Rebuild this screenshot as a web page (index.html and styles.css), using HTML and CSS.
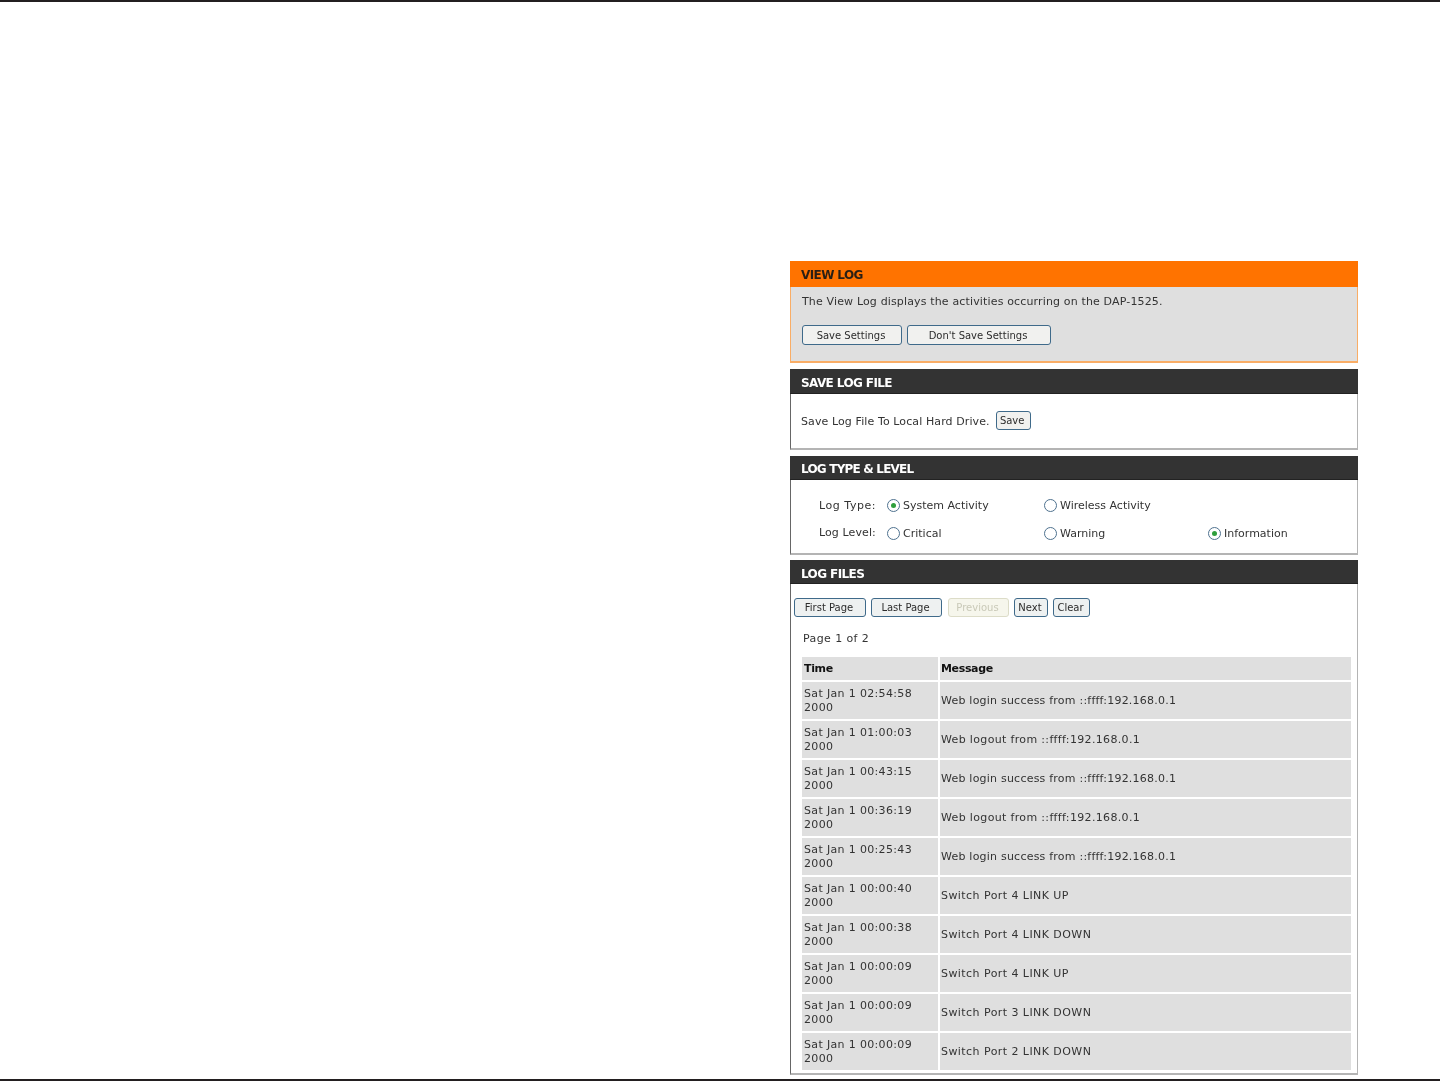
FILE: index.html
```html
<!DOCTYPE html>
<html lang="en">
<head>
<meta charset="utf-8">
<title>View Log</title>
<link rel="stylesheet" href="styles.css">
</head>
<body>
<div class="page">
  <div class="rule"></div>
  <main class="content">
    <div class="column">
      <section class="panel panel-intro">
        <h2 class="head head-orange">VIEW LOG</h2>
        <div class="body body-intro">
          <p class="intro-text">The View Log displays the activities occurring on the DAP-1525.</p>
          <div class="btn-row btn-row-intro">
            <button class="btn btn-save-settings">Save Settings</button>
            <button class="btn btn-dont-save">Don't Save Settings</button>
          </div>
        </div>
      </section>
      <section class="panel panel-save">
        <h2 class="head">SAVE LOG FILE</h2>
        <div class="body body-save">
          <span>Save Log File To Local Hard Drive.</span>
          <button class="btn btn-save">Save</button>
        </div>
      </section>
      <section class="panel panel-type">
        <h2 class="head">LOG TYPE &amp; LEVEL</h2>
        <div class="body body-type">
          <span class="lbl">Log Type:</span>
          <span class="opt"><i class="radio on"></i>System Activity</span>
          <span class="opt"><i class="radio"></i>Wireless Activity</span>
          <span></span>
          <span class="lbl lbl-level">Log Level:</span>
          <span class="opt"><i class="radio"></i>Critical</span>
          <span class="opt"><i class="radio"></i>Warning</span>
          <span class="opt"><i class="radio on"></i>Information</span>
        </div>
      </section>
      <section class="panel panel-files">
        <h2 class="head">LOG FILES</h2>
        <div class="body body-files">
          <div class="btn-row btn-row-files">
            <button class="btn btn-first">First Page</button>
            <button class="btn btn-last">Last Page</button>
            <button class="btn btn-prev" disabled>Previous</button>
            <button class="btn btn-next">Next</button>
            <button class="btn btn-clear">Clear</button>
          </div>
          <p class="page-no">Page 1 of 2</p>
          <table class="log">
            <thead><tr><th class="c-time">Time</th><th class="c-msg">Message</th></tr></thead>
            <tbody>
              <tr><td class="c-time">Sat Jan 1 02:54:58 2000</td><td class="c-msg">Web login success from ::ffff:192.168.0.1</td></tr>
              <tr class="row-logout"><td class="c-time">Sat Jan 1 01:00:03 2000</td><td class="c-msg">Web logout from ::ffff:192.168.0.1</td></tr>
              <tr><td class="c-time">Sat Jan 1 00:43:15 2000</td><td class="c-msg">Web login success from ::ffff:192.168.0.1</td></tr>
              <tr class="row-logout"><td class="c-time">Sat Jan 1 00:36:19 2000</td><td class="c-msg">Web logout from ::ffff:192.168.0.1</td></tr>
              <tr><td class="c-time">Sat Jan 1 00:25:43 2000</td><td class="c-msg">Web login success from ::ffff:192.168.0.1</td></tr>
              <tr class="row-switch"><td class="c-time">Sat Jan 1 00:00:40 2000</td><td class="c-msg">Switch Port 4 LINK UP</td></tr>
              <tr class="row-switch"><td class="c-time">Sat Jan 1 00:00:38 2000</td><td class="c-msg">Switch Port 4 LINK DOWN</td></tr>
              <tr class="row-switch"><td class="c-time">Sat Jan 1 00:00:09 2000</td><td class="c-msg">Switch Port 4 LINK UP</td></tr>
              <tr class="row-switch"><td class="c-time">Sat Jan 1 00:00:09 2000</td><td class="c-msg">Switch Port 3 LINK DOWN</td></tr>
              <tr class="row-switch"><td class="c-time">Sat Jan 1 00:00:09 2000</td><td class="c-msg">Switch Port 2 LINK DOWN</td></tr>
            </tbody>
          </table>
        </div>
      </section>
    </div>
  </main>
  <div class="rule rule-bottom"></div>
</div>
</body>
</html>
```
FILE: styles.css
```css
* { box-sizing: border-box; }
html, body { margin: 0; padding: 0; background: #fff; }
.page {
  height: 1081px;
  display: flex;
  flex-direction: column;
  overflow: hidden;
  font-family: "DejaVu Sans", sans-serif;
  font-size: 11px;
  color: #333;
}
.rule { height: 2px; background: #231f20; flex: none; }
.content {
  flex: 1;
  display: flex;
  justify-content: flex-end;
  padding: 259px 82px 0 0;
  min-height: 0;
}
.column {
  width: 568px;
  display: flex;
  flex-direction: column;
  gap: 6px;
  filter: blur(0.7px);
}
.panel {
  border: 1px solid #b4b4b4;
  border-left-color: #666;
  border-top: 0;
  border-bottom-width: 2px;
  background: #fff;
}
.panel-intro { height: 102px; border-color: #f9ad66; border-width: 0 1px 2px; background: #dfdfdf; }
.panel-save { height: 81px; }
.panel-type { height: 99px; }
.panel-files { height: 515px; margin-top: -1px; }
.head {
  margin: 0 -1px;
  height: 25px;
  padding: 0 0 0 11px;
  font-size: 12px;
  line-height: 28px;
  font-weight: 700;
  letter-spacing: -0.6px;
  color: #fff;
  background: #333;
  border-bottom: 1px solid #222;
}
.head-orange { height: 26px; line-height: 28px; color: #2a1f14; background: #ff7300; border-bottom: 0; }
.panel-type .head { height: 24px; line-height: 26px; letter-spacing: -0.8px; }
.panel-files .head { height: 24px; line-height: 28px; }
p { margin: 0; }
.body-intro { padding: 7px 0 0 11px; }
.intro-text { line-height: 15px; letter-spacing: 0.15px; }
.btn-row { display: flex; }
.btn-row-intro { gap: 5px; margin-top: 16px; }
.btn {
  height: 20px;
  padding: 0 2px 0 0;
  font: 10px "DejaVu Sans", sans-serif;
  letter-spacing: 0;
  color: #2c2c2c;
  background: #f1f1ef;
  border: 1.5px solid #3f6a8a;
  border-radius: 3px;
}
.btn-save-settings { width: 100px; }
.btn-dont-save { width: 144px; }
.body-save {
  display: flex;
  align-items: center;
  gap: 6px;
  padding: 18px 0 0 10px;
  letter-spacing: 0.1px;
}
.btn-save { width: 35px; height: 19px; position: relative; top: -1px; }
.body-type {
  display: grid;
  grid-template-columns: 68px 157px 164px 1fr;
  grid-template-rows: 28px 28px;
  align-items: center;
  padding: 11px 0 0 28px;
  letter-spacing: 0;
}
.lbl { letter-spacing: 0.55px; }
.lbl-level { letter-spacing: 0.1px; position: relative; top: -1px; }
.opt { display: flex; align-items: center; gap: 3px; }
.radio {
  flex: none;
  width: 13px;
  height: 13px;
  border: 1px solid #4f728f;
  border-radius: 50%;
  background: #fff;
  display: flex;
  align-items: center;
  justify-content: center;
}
.radio.on::after {
  content: "";
  width: 5px;
  height: 5px;
  border-radius: 50%;
  background: #2f9f3c;
}
.body-files { padding: 0 6px 0 3px; }
.btn-row-files { gap: 5px; padding-top: 14px; }
.btn-row-files .btn { height: 19px; background: #eef1f1; }
.btn-first { width: 72px; }
.btn-last { width: 71px; }
.btn-row-files .btn-prev { width: 61px; margin-left: 1px; color: #c9c9b8; background: #f6f6ec; border-color: #dcdcc8; }
.btn-next { width: 34px; }
.btn-clear { width: 37px; }
.page-no { margin: 14px 0 0 9px; line-height: 15px; letter-spacing: 0.4px; }
.log {
  margin: 9px 0 0 6px;
  width: 553px;
  border-collapse: separate;
  border-spacing: 2px;
  table-layout: fixed;
  line-height: 14px;
}
.log th, .log td { background: #dfdfdf; text-align: left; }
.log th { height: 23px; color: #111; font-weight: 700; letter-spacing: -0.35px; }
.log td { height: 37px; }
.c-time { width: 136px; padding: 0 18px 0 2px; letter-spacing: 0.34px; }
.c-msg { padding: 0 0 0 1px; letter-spacing: 0.22px; }
.row-logout .c-msg { letter-spacing: 0.34px; }
.row-switch .c-msg { letter-spacing: 0.44px; }
```
